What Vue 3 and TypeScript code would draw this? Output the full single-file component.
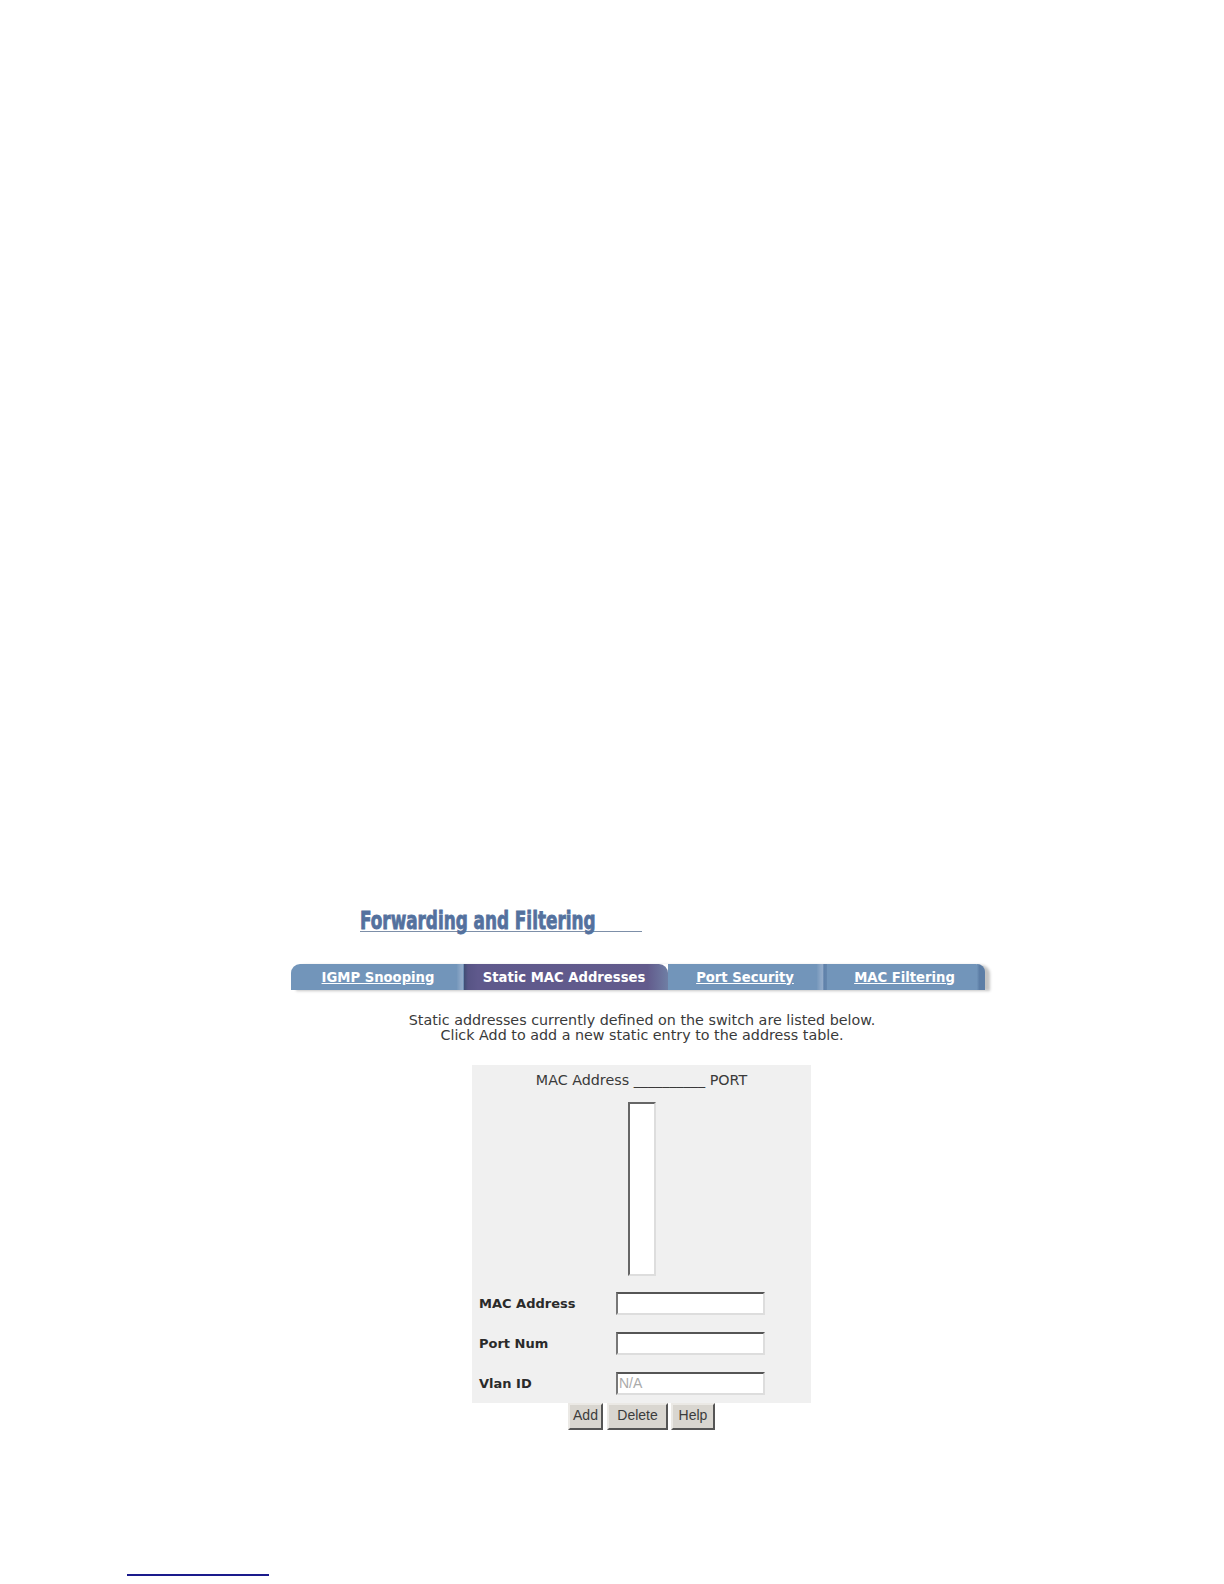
<script setup lang="ts">
const tabs = [
  { label: 'IGMP Snooping', width: 173, active: false },
  { label: 'Static MAC Addresses', width: 204, active: true },
  { label: 'Port Security', width: 156, active: false },
  { label: 'MAC Filtering', width: 161, active: false },
]
const fields = [
  { label: 'MAC Address', value: '' },
  { label: 'Port Num', value: '' },
  { label: 'Vlan ID', value: 'N/A' },
]
</script>

<template>
  <div class="page">
    <div class="heading-wrap">
      <h1 class="heading">Forwarding and Filtering</h1>
    </div>

    <nav class="tabs">
      <a v-for="t in tabs" :key="t.label" class="tab" :class="{ active: t.active }" :style="{ width: t.width + 'px' }">
        <span class="tab-label">{{ t.label }}</span>
      </a>
    </nav>

    <p class="intro">
      Static addresses currently defined on the switch are listed below.<br />
      Click Add to add a new static entry to the address table.
    </p>

    <section class="panel">
      <div class="list-head">MAC Address __________ PORT</div>
      <div class="listbox"></div>
      <div class="rows">
        <div v-for="f in fields" :key="f.label" class="row">
          <label class="label">{{ f.label }}</label>
          <input class="field" :value="f.value" :readonly="f.value !== ''" />
        </div>
      </div>
    </section>

    <div class="buttons">
      <button class="btn add">Add</button>
      <button class="btn del">Delete</button>
      <button class="btn help">Help</button>
    </div>

    <div class="footnote-rule"></div>
  </div>
</template>

<style scoped>
.page {
  width: 1224px;
  height: 1584px;
  background: #fff;
  padding-top: 909px;
  box-sizing: border-box;
  font-family: "DejaVu Sans", Verdana, sans-serif;
  overflow: hidden;
}
.heading-wrap {
  margin-left: 360px;
  width: 282px;
  height: 22px;
  border-bottom: 1px solid #7d8fa8;
}
.heading {
  margin: 0;
  padding-top: 1px;
  font-family: "DejaVu Sans", sans-serif;
  font-stretch: condensed;
  font-weight: 700;
  font-size: 24px;
  line-height: 22px;
  color: #54719e;
  white-space: nowrap;
  display: inline-block;
  transform: scaleX(0.78);
  transform-origin: left center;
  -webkit-text-stroke: 0.8px #54719e;
}
.tabs {
  display: flex;
  margin: 32px 0 0 291px;
  width: 694px;
  height: 26px;
  border-radius: 9px 9px 0 0;
  box-shadow: 5px 1px 3px #c4c4c4;
}
.tab {
  position: relative;
  display: flex;
  align-items: center;
  justify-content: center;
  height: 26px;
  box-sizing: border-box;
  background: #7295ba;
  color: #fff;
  font-size: 13.2px;
  font-weight: 700;
}
.tab::after {
  content: "";
  position: absolute;
  top: 0;
  right: -3px;
  bottom: 0;
  width: 10px;
  z-index: 1;
  background: linear-gradient(90deg, #7698bc 0, #8ba6c6 35%, #93abc9 55%, #5f81aa 70%, #6687ae 100%);
}
.tab:first-child {
  border-radius: 9px 0 0 0;
  padding-left: 1px;
}
.tab:last-child {
  border-radius: 0 9px 0 0;
}
.tab:nth-child(3) { padding-right: 2px; }
.tab:last-child::after {
  right: 0;
  width: 8px;
  border-radius: 0 9px 0 0;
  background: linear-gradient(90deg, #7093b8, #5d7ea6 30%);
}
.tab-label { text-decoration: underline; }
.tab.active {
  background: linear-gradient(90deg, #3f4d74 0, #575485 4px, #5f598c 14px, #625b8c 90%, #6f7ea4 100%);
  border-radius: 0 9px 0 0;
  padding-right: 4px;
  z-index: 1;
}
.tab.active::after { display: none; }
.tab.active .tab-label { text-decoration: none; }
.intro {
  margin: 23px 0 0 0;
  width: 1284px;
  text-align: center;
  font-size: 14.3px;
  line-height: 15px;
  color: #3a3a3a;
}
.panel {
  margin: 22px 0 0 472px;
  width: 339px;
  height: 338px;
  background: #f0f0f0;
  box-sizing: border-box;
  display: flex;
  flex-direction: column;
  align-items: center;
}
.list-head {
  margin-top: 6px;
  font-size: 14.3px;
  line-height: 18px;
  color: #3a3a3a;
  white-space: nowrap;
}
.listbox {
  margin-top: 13px;
  width: 28px;
  height: 174px;
  box-sizing: border-box;
  background: #fff;
  border: 2px solid;
  border-color: #666 #ddd #ddd #666;
}
.rows {
  align-self: stretch;
  margin-top: 16px;
  display: flex;
  flex-direction: column;
  gap: 17px;
}
.row {
  display: flex;
  align-items: center;
  height: 23px;
  padding-left: 7px;
}
.label {
  width: 137px;
  font-size: 13px;
  font-weight: 700;
  color: #2a2a2a;
}
.field {
  width: 149px;
  height: 23px;
  box-sizing: border-box;
  padding: 0 0 2px 1px;
  margin: 0;
  border: 2px solid;
  border-color: #555 #ddd #ddd #777;
  background: #fff;
  font-family: "Liberation Sans", Arial, sans-serif;
  font-size: 14px;
  color: #aaa;
  outline: none;
}
.buttons {
  display: flex;
  margin: 0 0 0 568px;
  height: 27px;
}
.btn {
  height: 27px;
  box-sizing: border-box;
  padding: 0 0 3px;
  background: #d9d6d0;
  border: 2px solid;
  border-color: #ebe9e5 #555 #555 #ebe9e5;
  font-family: "Liberation Sans", Arial, sans-serif;
  font-size: 14px;
  color: #3c3c3c;
}
.add { width: 35px; }
.del { width: 61px; margin-left: 4px; }
.help { width: 44px; margin-left: 3px; }
.footnote-rule {
  margin: 144px 0 0 127px;
  width: 142px;
  height: 2px;
  background: #1a1a8c;
}
</style>
